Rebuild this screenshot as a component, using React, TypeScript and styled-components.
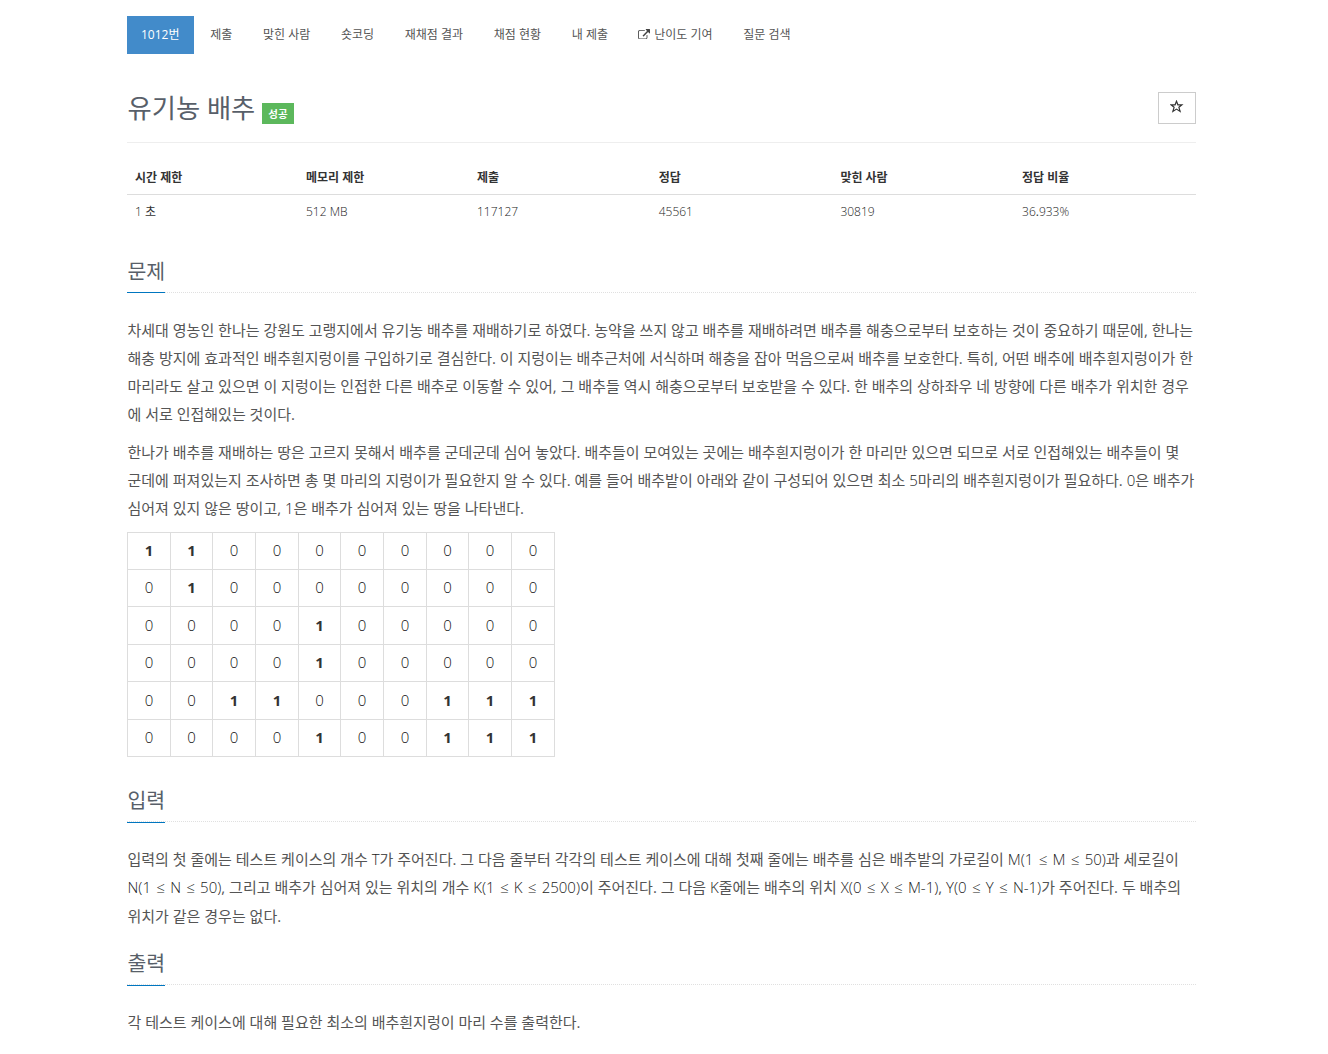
import { Fragment } from "react";
import styled, { createGlobalStyle } from "styled-components";

const menus = ["제출", "맞힌 사람", "숏코딩", "재채점 결과", "채점 현황", "내 제출", "난이도 기여", "질문 검색"];

const infos = [
  { title: "시간 제한", value: "1 초" },
  { title: "메모리 제한", value: "512 MB" },
  { title: "제출", value: "117127" },
  { title: "정답", value: "45561" },
  { title: "맞힌 사람", value: "30819" },
  { title: "정답 비율", value: "36.933%" },
];

const field = ["1100000000", "0100000000", "0000100000", "0000100000", "0011000111", "0000100111"];

const description = [
  [
    "차세대 영농인 한나는 강원도 고랭지에서 유기농 배추를 재배하기로 하였다. 농약을 쓰지 않고 배추를 재배하려면 배추를 해충으로부터 보호하는 것이 중요하기 때문에, 한나는",
    "해충 방지에 효과적인 배추흰지렁이를 구입하기로 결심한다. 이 지렁이는 배추근처에 서식하며 해충을 잡아 먹음으로써 배추를 보호한다. 특히, 어떤 배추에 배추흰지렁이가 한",
    "마리라도 살고 있으면 이 지렁이는 인접한 다른 배추로 이동할 수 있어, 그 배추들 역시 해충으로부터 보호받을 수 있다. 한 배추의 상하좌우 네 방향에 다른 배추가 위치한 경우",
    "에 서로 인접해있는 것이다.",
  ],
  [
    "한나가 배추를 재배하는 땅은 고르지 못해서 배추를 군데군데 심어 놓았다. 배추들이 모여있는 곳에는 배추흰지렁이가 한 마리만 있으면 되므로 서로 인접해있는 배추들이 몇",
    "군데에 퍼져있는지 조사하면 총 몇 마리의 지렁이가 필요한지 알 수 있다. 예를 들어 배추밭이 아래와 같이 구성되어 있으면 최소 5마리의 배추흰지렁이가 필요하다. 0은 배추가",
    "심어져 있지 않은 땅이고, 1은 배추가 심어져 있는 땅을 나타낸다.",
  ],
];

const input = [
  "입력의 첫 줄에는 테스트 케이스의 개수 T가 주어진다. 그 다음 줄부터 각각의 테스트 케이스에 대해 첫째 줄에는 배추를 심은 배추밭의 가로길이 M(1 ≤ M ≤ 50)과 세로길이",
  "N(1 ≤ N ≤ 50), 그리고 배추가 심어져 있는 위치의 개수 K(1 ≤ K ≤ 2500)이 주어진다. 그 다음 K줄에는 배추의 위치 X(0 ≤ X ≤ M-1), Y(0 ≤ Y ≤ N-1)가 주어진다. 두 배추의",
  "위치가 같은 경우는 없다.",
];

const output = ["각 테스트 케이스에 대해 필요한 최소의 배추흰지렁이 마리 수를 출력한다."];

// latin letters and digits are thinner than the hangul around them
function Line({ text }: { text: string }) {
  return (
    <>
      {text.split(/(≤|[A-Z0-9()%-]+)/).map((part, i) => {
        if (part === "≤") return <LessEqual key={i}>{part}</LessEqual>;
        if (i % 2 === 1) return <Thin key={i}>{part}</Thin>;
        return part;
      })}
    </>
  );
}

function Paragraph({ lines, lineHeight = 28 }: { lines: string[]; lineHeight?: number }) {
  return (
    <Text $lineHeight={lineHeight}>
      {lines.map((line, i) => (
        <Fragment key={i}>
          {i > 0 && <br />}
          <Line text={line} />
        </Fragment>
      ))}
    </Text>
  );
}

export default function App() {
  return (
    <Container>
      <GlobalStyle />
      <Menu>
        <MenuItem $active>1012번</MenuItem>
        {menus.map((menu) => (
          <MenuItem key={menu}>
            {menu === "난이도 기여" && (
              <LinkIcon viewBox="0 0 1792 1536">
                <path d="M1408 928v320q0 119-84.5 203.5T1120 1536H288q-119 0-203.5-84.5T0 1248V416q0-119 84.5-203.5T288 128h704q14 0 23 9t9 23v64q0 14-9 23t-23 9H288q-66 0-113 47t-47 113v832q0 66 47 113t113 47h832q66 0 113-47t47-113V928q0-14 9-23t23-9h64q14 0 23 9t9 23zm384-864v512q0 26-19 45t-45 19-45-19l-176-176-652 652q-10 10-23 10t-23-10L695 983q-10-10-10-23t10-23l652-652-176-176q-19-19-19-45t19-45 45-19h512q26 0 45 19t19 45z" />
              </LinkIcon>
            )}
            {menu}
          </MenuItem>
        ))}
      </Menu>

      <Header>
        <Title>유기농 배추</Title>
        <Badge>성공</Badge>
        <StarButton aria-label="즐겨찾기">
          <svg width="14" height="13" viewBox="0 0 14 13">
            <path
              d="M6.5 1.2 7.9 4.8h4L8.9 7.3l1.2 4.1-3.6-2.3-3.6 2.3 1.2-4.1L1.1 4.8h4Z"
              fill="none"
              stroke="#333"
              strokeWidth="1.2"
            />
          </svg>
        </StarButton>
      </Header>

      <InfoTable>
        {infos.map((info) => (
          <InfoHead key={info.title}>{info.title}</InfoHead>
        ))}
        {infos.map((info) => (
          <InfoCell key={info.title}>
            <Line text={info.value} />
          </InfoCell>
        ))}
      </InfoTable>

      <Headline>
        <HeadlineText>문제</HeadlineText>
      </Headline>
      {description.map((lines, i) => (
        <Paragraph key={i} lines={lines} />
      ))}
      <Field>
        {field.map((row, y) =>
          row.split("").map((cell, x) => (
            <FieldCell key={x + "-" + y} $bold={cell === "1"}>
              {cell}
            </FieldCell>
          ))
        )}
      </Field>

      <Headline $top={27}>
        <HeadlineText $drop>입력</HeadlineText>
      </Headline>
      <Paragraph lines={input} lineHeight={28.4} />

      <Headline $top={16.8}>
        <HeadlineText $drop>출력</HeadlineText>
      </Headline>
      <Paragraph lines={output} />
    </Container>
  );
}

const GlobalStyle = createGlobalStyle`
  * {
    box-sizing: border-box;
  }

  body {
    margin: 0;
    background: #fff;
    color: #333;
    font-family: "Open Sans", "Noto Sans CJK KR", sans-serif;
    font-size: 12px;
    overflow: hidden;
  }
`;

const Container = styled.div`
  width: 1069px;
  margin-left: 127px;
  padding-top: 16px;
`;

const Menu = styled.nav`
  display: flex;
  gap: 2.7px;
`;

const MenuItem = styled.a<{ $active?: boolean }>`
  display: flex;
  align-items: center;
  height: 38px;
  padding: 0 14px 2px;
  white-space: nowrap;
  color: ${({ $active }) => ($active ? "#fff" : "#555")};
  background-color: ${({ $active }) => ($active ? "#428bca" : "transparent")};
`;

const LinkIcon = styled.svg`
  width: 12px;
  height: 10.5px;
  margin-right: 4px;
  margin-left: -0.5px;
  fill: #444;
`;

const Header = styled.header`
  display: flex;
  height: 89px;
  border-bottom: 1px solid #eee;
`;

const Title = styled.h1`
  width: 128px;
  margin: 36px 7px 0 0;
  padding-left: 0.5px;
  font-size: 26.3px;
  line-height: 36px;
  font-weight: 400;
  color: #585f69;
  white-space: nowrap;
`;

const Badge = styled.span`
  height: 21px;
  width: 32px;
  margin-top: 49px;
  background-color: #5cb85c;
  color: #fff;
  font-size: 10.5px;
  font-weight: 700;
  line-height: 22px;
  text-align: center;
`;

const StarButton = styled.button`
  width: 38px;
  height: 32px;
  margin: 38px 0 0 auto;
  padding: 0 0 4px;
  display: flex;
  align-items: center;
  justify-content: center;
  border: 1px solid #ccc;
  background-color: #fff;
`;

const InfoTable = styled.div`
  display: grid;
  grid-template-columns: 171px 171px 181.7px 181.7px 181.7px 1fr;
  grid-template-rows: 35px 34px;
  margin-top: 17px;
`;

const InfoHead = styled.div`
  padding-left: 8px;
  line-height: 36px;
  font-weight: 700;
  border-bottom: 1px solid #ddd;
`;

const InfoCell = styled.div`
  padding-left: 8px;
  line-height: 34px;
`;

const Headline = styled.div<{ $top?: number }>`
  height: 38px;
  margin: ${({ $top }) => $top ?? 26}px 0 23px;
  border-bottom: 1px dotted #e0e0e0;
`;

const HeadlineText = styled.h2<{ $drop?: boolean }>`
  width: 38px;
  height: ${({ $drop }) => ($drop ? 39 : 38)}px;
  margin: 0;
  padding-left: 0.5px;
  border-bottom: 1px solid #0076c0;
  color: #585f69;
  font-size: 20.5px;
  font-weight: 400;
  line-height: 32px;
  white-space: nowrap;
`;

const Text = styled.p<{ $lineHeight: number }>`
  margin: 0 0 10px;
  padding-left: 0.5px;
  color: #555;
  font-size: 15px;
  line-height: ${({ $lineHeight }) => $lineHeight}px;
  white-space: nowrap;
`;

const Thin = styled.span`
  color: #222;
  font-weight: 300;
`;

const LessEqual = styled.span`
  padding: 0 1.4px;
  color: #222;
  font-weight: 300;
`;

const Field = styled.div`
  display: grid;
  grid-template-columns: 43px 42px 43px 43px 42px 43px 43px 42px 43px 43px;
  grid-template-rows: 37px 37px 38px 37px 38px 37px;
  width: 428px;
  border-top: 1px solid #ddd;
  border-left: 1px solid #ddd;
`;

const FieldCell = styled.div<{ $bold: boolean }>`
  display: flex;
  align-items: center;
  justify-content: center;
  padding-bottom: 0.5px;
  border-right: 1px solid #ddd;
  border-bottom: 1px solid #ddd;
  color: ${({ $bold }) => ($bold ? "#333" : "#111")};
  font-size: 15px;
  font-weight: ${({ $bold }) => ($bold ? 700 : 300)};
  line-height: 21px;
`;
